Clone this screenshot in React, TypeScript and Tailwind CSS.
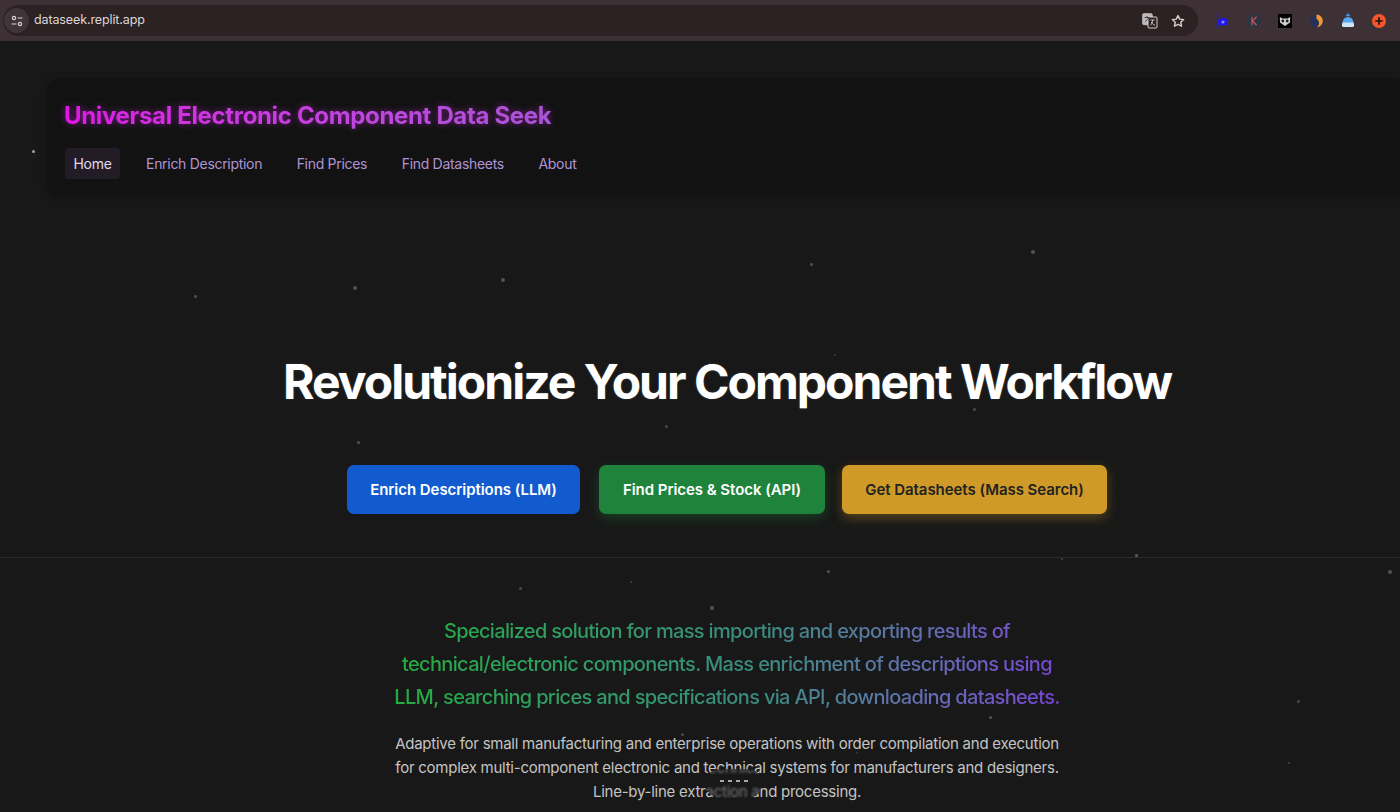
import React from "react";

const particles: [number, number, number, number][] = [
  [33, 151, 3, 0.6], [195, 296, 3, 0.25], [355, 288, 4, 0.25], [503, 280, 4, 0.25], [811, 264, 3, 0.25],
  [1033, 252, 4, 0.25], [835, 355, 2, 0.15], [974, 409, 3, 0.22], [666, 426, 3, 0.22], [358, 442, 3, 0.25],
  [1136, 555, 3, 0.3], [1062, 559, 2, 0.2], [1390, 572, 4, 0.25], [828, 571, 3, 0.25], [631, 582, 2, 0.2],
  [520, 588, 3, 0.22], [712, 608, 4, 0.25], [1298, 701, 3, 0.22], [990, 717, 3, 0.25], [682, 734, 3, 0.22],
  [1289, 763, 2, 0.2], [857, 753, 2, 0.15],
];

const nav = ["Enrich Description", "Find Prices", "Find Datasheets", "About"];

function BrowserBar() {
  return (
    <div className="h-[41px] bg-[#3d3135] flex items-center pl-[3px] pr-[14px] shrink-0">
      <div className="h-[31px] w-[1195px] rounded-full bg-[#2c2123] flex items-center pl-[1px] pr-[13px]">
        <div className="w-[25px] h-[25px] rounded-full bg-[#40363a] flex items-center justify-center">
          <svg width="14" height="14" viewBox="0 0 14 14" fill="none" stroke="#d9d3d4" strokeWidth="1.2">
            <circle cx="4" cy="4" r="1.6" />
            <path d="M7.5 4H12.5M1.5 10H6.5" />
            <circle cx="10" cy="10" r="1.6" />
          </svg>
        </div>
        <span className="ml-[5px] text-[12.5px] text-[#dcd6d7] tracking-[-0.12px]">dataseek.replit.app</span>
        <div className="ml-auto flex items-center gap-[13px]">
          <svg width="16" height="16" viewBox="0 0 16 16">
            <rect x="0.7" y="0.7" width="9.5" height="11" rx="1.2" fill="#bdb8b9" stroke="#bdb8b9" />
            <rect x="6" y="4" width="9" height="11" rx="1" fill="#2c2123" stroke="#d5d0d1" />
            <path d="M2.6 4.5H7.4M5 3V4.5M3.2 8.4C4.6 7.6 5.8 6.4 6.4 4.6" stroke="#3d3135" strokeWidth="0.9" fill="none" />
            <path d="M8.5 7H12.7M10.6 7C10.6 9.4 9.6 11.4 8.4 12.4M9.2 9C10.2 10.6 11.4 11.8 13 12.4" stroke="#d5d0d1" strokeWidth="0.9" fill="none" />
          </svg>
          <svg width="14" height="14" viewBox="0 0 24 24" fill="none" stroke="#d5d0d1" strokeWidth="2.4" strokeLinejoin="round">
            <path d="M12 2.5l2.95 6.2 6.8.9-5 4.7 1.3 6.7-6.05-3.3-6.05 3.3 1.3-6.7-5-4.7 6.8-.9z" />
          </svg>
        </div>
      </div>
      <div className="flex-1 flex items-center justify-between pl-[18px]">
        <svg width="14" height="14" viewBox="0 0 14 14">
          <path d="M0.5 3V0.5H3M11 0.5H13.5V3M13.5 11V13.5H11M3 13.5H0.5V11" stroke="#2a1fb0" strokeWidth="0.8" fill="none" strokeDasharray="1 1" />
          <path d="M2 5h2.5l1-1.5h3l1 1.5H12v6.5H2z" fill="#1f18e8" />
          <circle cx="7" cy="8" r="1.6" fill="#8d88f0" />
        </svg>
        <svg width="14" height="14" viewBox="0 0 14 14">
          <circle cx="7" cy="7" r="7" fill="#2a3645" />
          <path d="M5 2.8V11.2M9.6 2.8L5.6 7L9.6 11.2" stroke="#c4534f" strokeWidth="1.3" fill="none" />
        </svg>
        <svg width="14" height="14" viewBox="0 0 14 14">
          <rect width="14" height="14" fill="#000" />
          <path d="M1.8 3L4.5 4.5H9.5L12.2 3L12 8.5L7 12L2 8.5Z" fill="#cfcfcf" />
          <circle cx="4.8" cy="7" r="1.4" fill="#222" />
          <circle cx="9.2" cy="7" r="1.4" fill="#222" />
        </svg>
        <svg width="14" height="14" viewBox="0 0 14 14">
          <circle cx="6.2" cy="7" r="6" fill="#23305a" />
          <path d="M6.5 0.6C11.5 0.6 15.5 7 10.5 11.8C9.5 12.8 8 13.2 7 13C9.8 11 9.8 6.5 6.5 5Z" fill="#f3962b" />
        </svg>
        <svg width="14" height="15" viewBox="0 0 14 15">
          <path d="M7 0L9.6 3.2H4.4Z" fill="#3d8fe8" />
          <path d="M3 5.5Q7 2.5 11 5.5L13 10H1Z" fill="#5aa6f2" />
          <rect x="1" y="9.5" width="12" height="4.5" rx="1.5" fill="#cfe4f8" />
        </svg>
        <svg width="14" height="14" viewBox="0 0 14 14">
          <circle cx="7" cy="7" r="7" fill="#f4552a" />
          <path d="M7 3.3V10.7M3.3 7H10.7" stroke="#1c1210" strokeWidth="1.7" />
        </svg>
      </div>
    </div>
  );
}

export default function App() {
  return (
    <div className="relative w-[1400px] h-[812px] overflow-hidden bg-[#181818] font-['Inter',sans-serif] flex flex-col">
      <BrowserBar />

      <div className="pt-[38px] pl-[47px]">
        <header className="h-[117px] rounded-l-[10px] bg-[#121212] shadow-[0_2px_10px_rgba(0,0,0,0.25)] pl-[18px] pt-[21px]">
          <h2 className="-ml-px text-[24px] leading-[32px] font-bold tracking-[-0.34px] text-transparent bg-clip-text bg-gradient-to-r from-[#e015e6] to-[#a855d8] w-fit [filter:drop-shadow(0_0_3px_rgba(200,40,220,0.55))]">
            Universal Electronic Component Data Seek
          </h2>
          <nav className="flex items-center gap-[17.5px] mt-[16px] text-[14px] leading-[20px] tracking-[-0.3px] text-[#b094d4]">
            <a className="px-[8.5px] py-[5.5px] rounded-[4px] bg-[#211c26] text-[#e3d9ee]">Home</a>
            {nav.map((n) => (
              <a key={n} className="px-[8.5px] py-[5.5px]">{n}</a>
            ))}
          </nav>
        </header>
      </div>

      <section className="pt-[156px] flex flex-col items-center h-[362px] border-b border-[#2a2a2a] box-border">
        <h1 className="text-[48px] leading-[60px] font-bold tracking-[-1.97px] text-white text-center pl-[54px] [text-shadow:0_0_3px_rgba(255,255,255,0.12)]">
          Revolutionize Your Component Workflow
        </h1>
        <div className="flex mt-[53px] pl-[54px] text-[15px] font-semibold tracking-[-0.05px]">
          <button className="w-[233px] h-[49px] pt-px rounded-[7px] bg-[#115bcf] text-white">Enrich Descriptions (LLM)</button>
          <button className="ml-[19px] w-[226px] h-[49px] pt-px rounded-[7px] bg-[#20833c] text-white shadow-[0_4px_12px_rgba(32,131,60,0.35)]">Find Prices &amp; Stock (API)</button>
          <button className="ml-[17px] w-[265px] h-[49px] pt-px rounded-[7px] bg-[#cf9a27] text-[#222] shadow-[0_4px_12px_rgba(207,154,39,0.35)]">Get Datasheets (Mass Search)</button>
        </div>
      </section>

      <section className="flex flex-col items-center pt-[57px] pl-[54px]">
        <p className="w-[680px] text-center text-[20px] leading-[33px] font-[450] tracking-[-0.67px] text-transparent bg-clip-text bg-gradient-to-r from-[#24ad3c] via-[#3a8c80] via-55% to-[#7a3fd8]">
          Specialized solution for mass importing and exporting results of technical/electronic components. Mass enrichment of descriptions using LLM, searching prices and specifications via API, downloading datasheets.
        </p>
        <p className="w-[680px] mt-[18px] text-center text-[15px] leading-[24px] tracking-[-0.25px] text-[#c4c4c4]">
          Adaptive for small manufacturing and enterprise operations with order compilation and execution for complex multi-component electronic and technical systems for manufacturers and designers. Line-by-line extraction and processing.
        </p>
      </section>

      {particles.map(([x, y, s, o], i) => (
        <span
          key={i}
          className="absolute rounded-full bg-white"
          style={{ left: x - s / 2, top: y - s / 2, width: s, height: s, opacity: o }}
        />
      ))}

      <div className="absolute left-[706px] top-[769px] w-[56px] h-[29px] rounded-[14px] bg-[#181818]/50 backdrop-blur-[1px] flex items-start justify-center gap-[4px] pt-[11px]">
        {[0, 1, 2, 3].map((i) => (
          <span key={i} className="w-[4px] h-[2px] bg-[#a8a8a8]" />
        ))}
      </div>
    </div>
  );
}
